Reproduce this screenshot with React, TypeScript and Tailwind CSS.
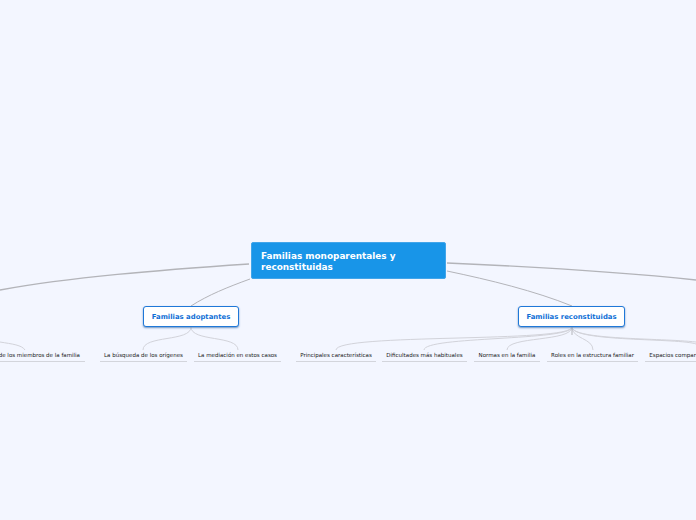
const font = { fontFamily: '"DejaVu Sans", Verdana, sans-serif' };

function Leaf({ className, text }: { className: string; text: string }) {
  return (
    <div
      className={`h-[12px] shrink-0 border-b border-[#d3d5dc] text-center text-[5.5px] leading-[10px] whitespace-nowrap text-[#1a1a1a] ${className}`}
    >
      {text}
    </div>
  );
}

function Branch({ className, text }: { className: string; text: string }) {
  return (
    <div
      className={`flex h-[21px] shrink-0 items-center justify-center rounded-[3px] border border-[#1f78d8] bg-white pt-[1px] text-[6.9px] font-bold text-[#0f6fd6] shadow-[0_1px_2px_#6f94c2] ${className}`}
    >
      {text}
    </div>
  );
}

export default function App() {
  return (
    <div className="relative h-[520px] w-[696px] overflow-hidden bg-[#f3f6ff] pt-[242px]" style={font}>
      <svg className="absolute inset-0" width="696" height="520" fill="none">
        <g stroke="#b3b4b9" strokeWidth="1.4">
          <path d="M249 264 C160 270 70 277 0 290" />
          <path d="M447 263 C540 267 630 273 696 280" />
          <path d="M250 279 C228 287 208 295 191 306" strokeWidth="1" />
          <path d="M447 271 C490 280 535 291 572 306" strokeWidth="1" />
        </g>
        <g stroke="#d2d3da" strokeWidth="1">
          <path d="M191 327 C191 342 143 335 143 350" />
          <path d="M191 327 C191 342 238 335 238 350" />
          <path d="M0 342 C12 344 22 345 25 350" />
          <path d="M572 327 C572 343 336 333 336 350" />
          <path d="M572 327 C572 341 424 336 424 350" />
          <path d="M572 327 C572 342 507 336 507 350" />
          <path d="M572 327 C572 339 593 338 593 350" />
          <path d="M572 327 C572 342 680 338 696 344" />
          <path d="M572 327 C572 340 660 338 696 342" />
        </g>
        <path d="M572 327 V335" stroke="#b3b4b9" />
      </svg>

      <div className="relative ml-[251px] flex h-[37px] w-[195px] items-center rounded-[2px] border border-[#41a5ea] bg-[#1895e8] px-[9px] pt-[2px] text-[8.9px] leading-[11px] font-bold text-white">
        Familias monoparentales y
        <br />
        reconstituidas
      </div>

      <div className="relative mt-[27px] ml-[143px] flex gap-[279px]">
        <Branch className="w-[96px]" text="Familias adoptantes" />
        <Branch className="w-[107px]" text="Familias reconstituidas" />
      </div>

      <div className="relative mt-[23px] ml-[-60px] flex w-[800px] gap-[7px]">
        <div className="h-[12px] w-[145px] shrink-0 border-b border-[#d3d5dc] pr-[5px] text-right text-[5.5px] leading-[10px] whitespace-nowrap text-[#1a1a1a]">
          Cambios de los miembros de la familia
        </div>
        <Leaf className="ml-[8px] w-[87px]" text="La búsqueda de los orígenes" />
        <Leaf className="w-[87px]" text="La mediación en estos casos" />
        <Leaf className="ml-[8px] w-[80px]" text="Principales características" />
        <Leaf className="ml-[-1px] w-[85px]" text="Dificultades más habituales" />
        <Leaf className="w-[66px]" text="Normas en la familia" />
        <Leaf className="w-[91px]" text="Roles en la estructura familiar" />
        <Leaf className="w-[99px]" text="Espacios compartidos y privados" />
      </div>
    </div>
  );
}
